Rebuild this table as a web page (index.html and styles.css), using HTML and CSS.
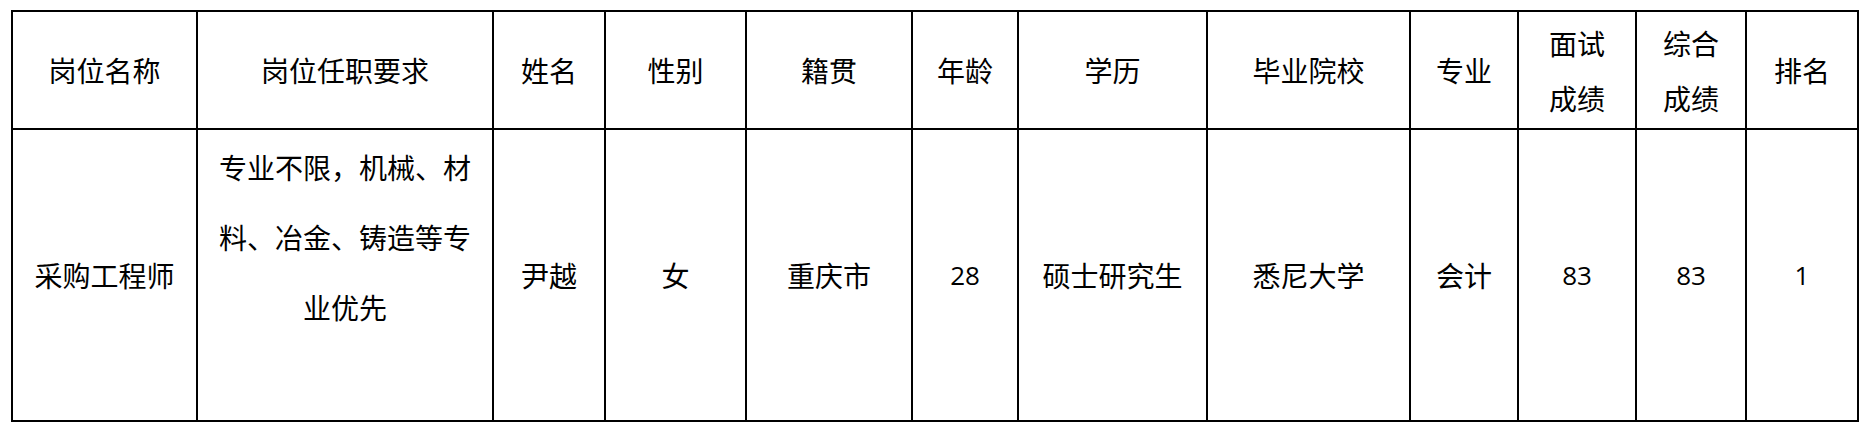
FILE: index.html
```html
<!DOCTYPE html>
<html lang="zh-CN">
<head>
<meta charset="utf-8">
<title>岗位</title>
<link rel="stylesheet" href="styles.css">
</head>
<body>
<table class="grid">
  <colgroup>
    <col class="c1"><col class="c2"><col class="c3"><col class="c4"><col class="c5"><col class="c6">
    <col class="c7"><col class="c8"><col class="c9"><col class="c10"><col class="c11"><col class="c12">
  </colgroup>
  <thead>
    <tr class="head">
      <th>岗位名称</th>
      <th>岗位任职要求</th>
      <th>姓名</th>
      <th>性别</th>
      <th>籍贯</th>
      <th>年龄</th>
      <th>学历</th>
      <th>毕业院校</th>
      <th>专业</th>
      <th class="two">面试<br>成绩</th>
      <th class="two">综合<br>成绩</th>
      <th>排名</th>
    </tr>
  </thead>
  <tbody>
    <tr class="body">
      <td>采购工程师</td>
      <td class="req"><div class="req-text">专业不限，机械、材料、冶金、铸造等专业优先</div></td>
      <td>尹越</td>
      <td>女</td>
      <td>重庆市</td>
      <td class="num">28</td>
      <td>硕士研究生</td>
      <td>悉尼大学</td>
      <td>会计</td>
      <td class="num">83</td>
      <td class="num">83</td>
      <td class="num">1</td>
    </tr>
  </tbody>
</table>
</body>
</html>
```

FILE: styles.css
```css
html, body {
  margin: 0;
  padding: 0;
  background: #ffffff;
}

body {
  padding: 10px 0 0 11px;
  font-family: "Noto Sans CJK SC", "Noto Sans", sans-serif;
  color: #000000;
}

.grid {
  border-collapse: collapse;
  table-layout: fixed;
  width: 1848px;
}

.grid th,
.grid td {
  border: 2px solid #000000;
  text-align: center;
  vertical-align: middle;
  font-weight: normal;
  font-size: 28px;
  padding: 0 10px;
}

.c1 { width: 185px; }
.c2 { width: 296px; }
.c3 { width: 112px; }
.c4 { width: 141px; }
.c5 { width: 166px; }
.c6 { width: 106px; }
.c7 { width: 189px; }
.c8 { width: 203px; }
.c9 { width: 108px; }
.c10 { width: 118px; }
.c11 { width: 110px; }
.c12 { width: 112px; }

.head {
  height: 118px;
}

.head th {
  line-height: 40px;
}

.head th.two {
  line-height: 55px;
  padding-top: 2px;
}

.body {
  height: 292px;
}

.body td {
  line-height: 40px;
}

.req-text {
  line-height: 70px;
  padding-bottom: 77px;
}

.body td.num {
  font-family: "Open Sans", "Liberation Sans", sans-serif;
  font-size: 26px;
}
```
